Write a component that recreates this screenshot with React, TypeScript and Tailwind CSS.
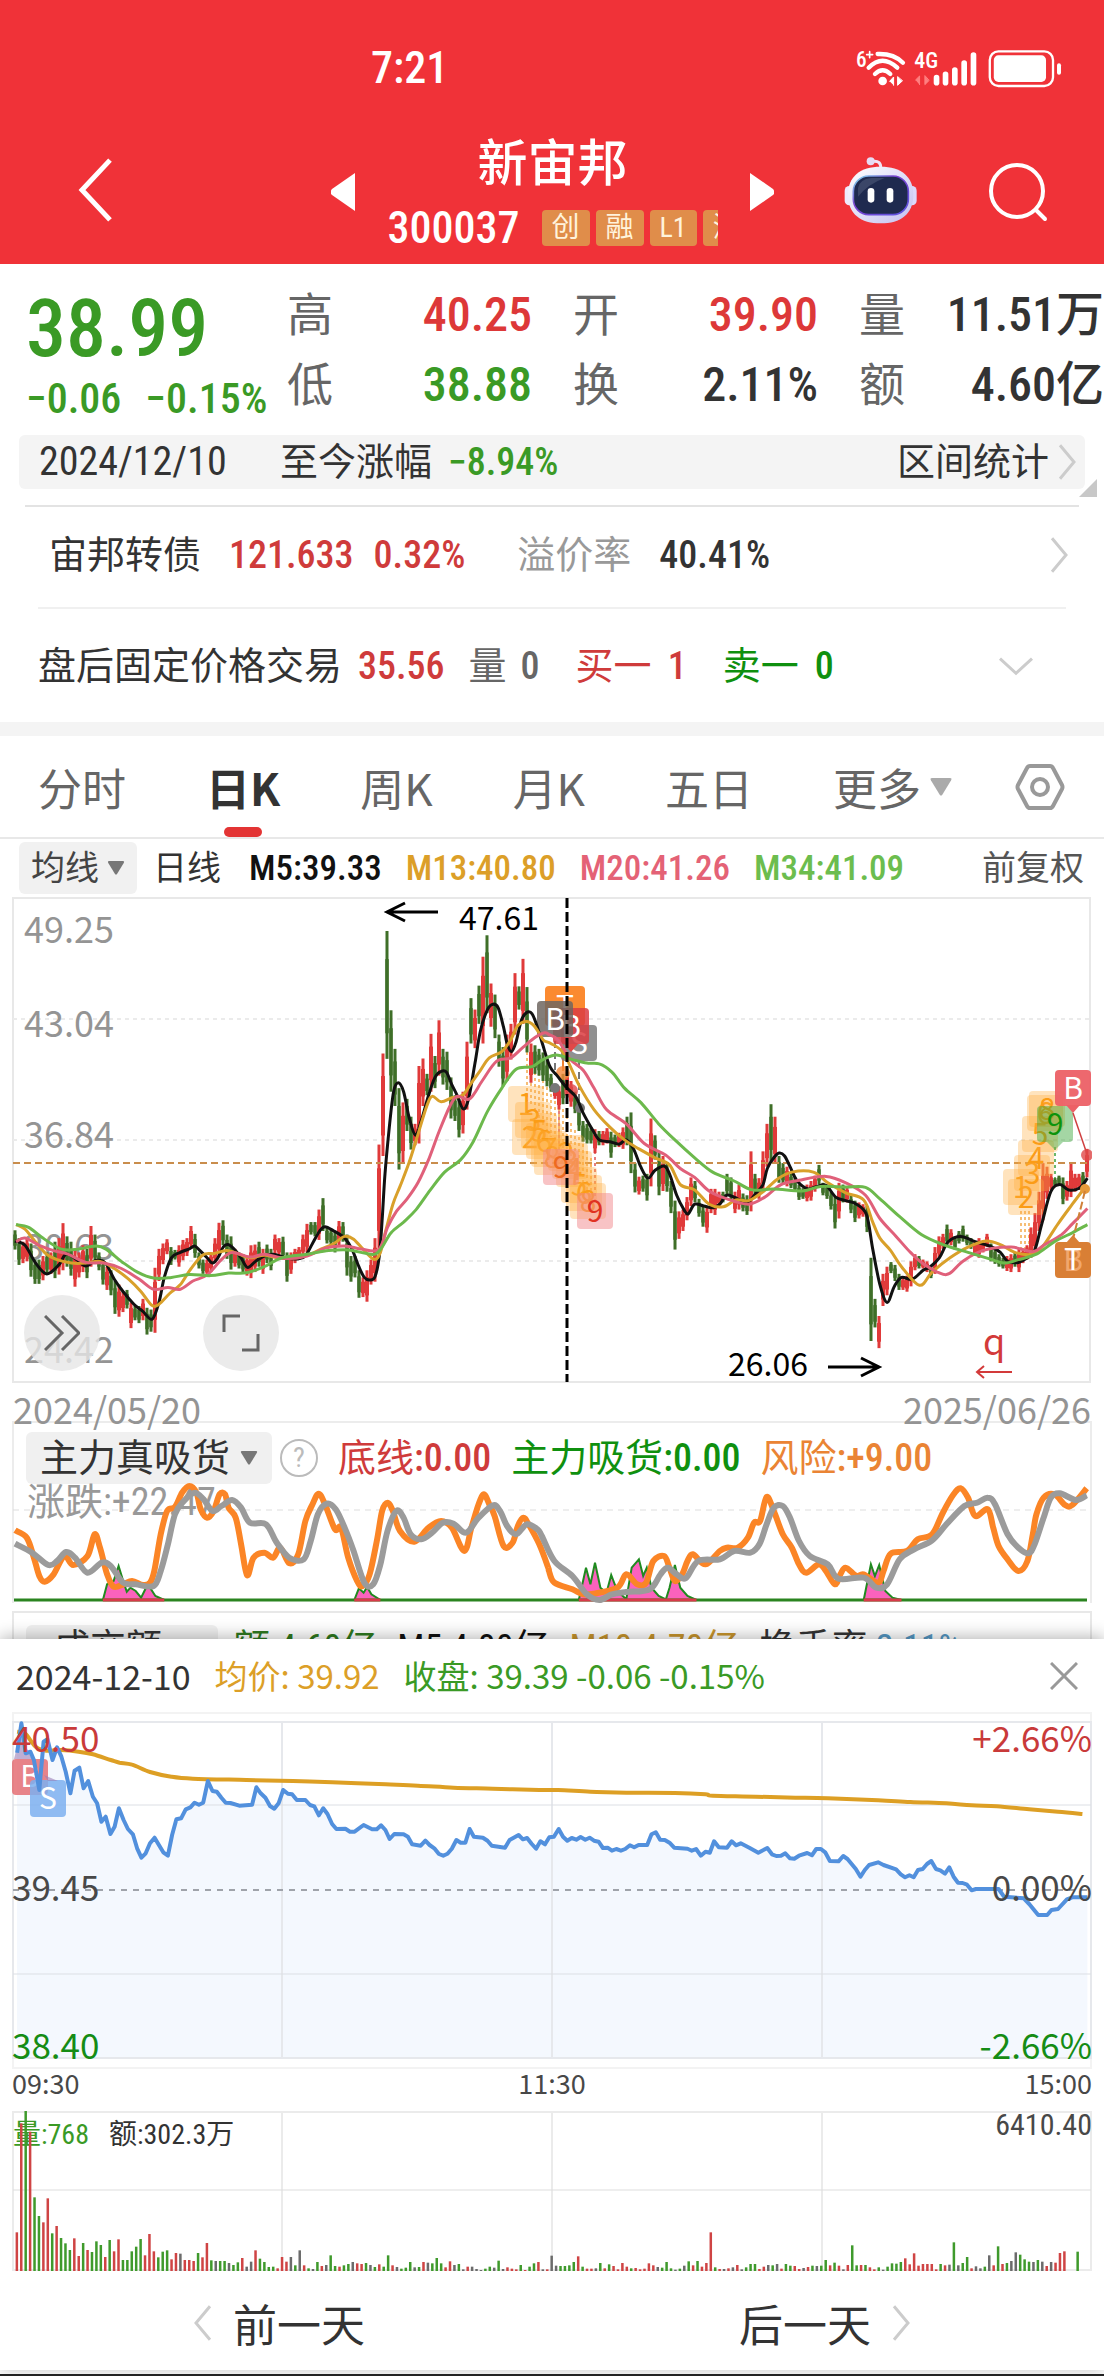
import React from "react";

type Pt = [number, number];
type Frame = { ox: number; oy: number; sx: number; sy: number };

const parse = (s: string, f: Frame): Pt[] =>
  s.trim().split(/\s+/).map((p) => {
    const [x, y] = p.split(",").map(Number);
    return [f.ox + x * f.sx, f.oy + y * f.sy];
  });

const line = (pts: Pt[]) => "M" + pts.map((p) => `${p[0].toFixed(1)} ${p[1].toFixed(1)}`).join("L");

const smooth = (pts: Pt[]) => {
  let d = `M${pts[0][0]} ${pts[0][1]}`;
  for (let i = 0; i < pts.length - 1; i++) {
    const a = pts[Math.max(0, i - 1)];
    const b = pts[i];
    const c = pts[i + 1];
    const e = pts[Math.min(pts.length - 1, i + 2)];
    const n = (v: number) => v.toFixed(1);
    d += `C${n(b[0] + (c[0] - a[0]) / 6)} ${n(b[1] + (c[1] - a[1]) / 6)} ${n(c[0] - (e[0] - b[0]) / 6)} ${n(c[1] - (e[1] - b[1]) / 6)} ${n(c[0])} ${n(c[1])}`;
  }
  return d;
};

const kL: Frame = { ox: 0, oy: 880, sx: 0.35714, sy: 0.35714 };
const kR: Frame = { ox: 540, oy: 880, sx: 0.35969, sy: 0.35714 };
const sL: Frame = { ox: 0, oy: 1400, sx: 0.35714, sy: 1 / 3 };
const sR: Frame = { ox: 540, oy: 1400, sx: 0.35969, sy: 1 / 3 };
const dL: Frame = { ox: 0, oy: 1700, sx: 0.35714, sy: 1 / 3 };
const dR: Frame = { ox: 540, oy: 1700, sx: 0.35969, sy: 1 / 3 };

/* Daily candles: direction, high, low */
const candlesL =
  "g978-1032 g1000-1075 r1010-1070 r1000-1065 g1015-1108 g1060-1128 g1060-1128 r1050-1118 g1040-1100 r1040-1100 g1010-1112 r1000-1102 r958-1090 g995-1080 g1010-1105 r1030-1136 r1040-1110 r1020-1095 g1030-1112 r966-1080 g990-1070 g1040-1090 g1060-1130 r1080-1145 g1090-1160 g1120-1212 r1130-1220 r1150-1207 g1145-1197 r1180-1252 g1190-1230 g1190-1238 r1170-1230 g1195-1270 g1200-1262 r1083-1265 r1030-1120 r1015-1073 r1003-1045 g1025-1075 g1033-1060 r1020-1080 r1005-1062 r1000-1050 r966-1030 g988-1055 g1040-1085 g1060-1100 r1060-1105 r1040-1095 r1000-1070 r957-1050 g950-1020 g990-1058 g995-1088 r1030-1080 g1040-1085 g1045-1098 r1050-1105 r1020-1112 r1018-1095 g1010-1080 r1030-1100 g1018-1070 g1030-1090 r990-1045 r1000-1050 g996-1060 g1040-1122 r1040-1100 r1030-1070 r1025-1060 r990-1050 r960-1040 g955-990 g955-995 r920-1005 g888-980 g970-1015 g975-1020 g980-1040 r952-1020 g955-1010 g990-1105 g1050-1122 g1050-1110 g1090-1167 r1110-1165 r1090-1178 r1060-1130 r1000-1122 r738-1040 r483-770 g140-498 g362-590 g470-630 g580-808 r620-790 g610-700 g660-752 r680-740 r518-735 r497-630 g540-600 r428-590 g490-580 r390-545 g470-570 g478-585 g550-665 g600-672 g610-718 r590-707 r450-640 g328-455 r360-468 g293-400 r212-455 g152-370 r287-408 g318-440 g430-520 g465-575 r430-560 r400-500 r258-430 g295-360 r218-400 g297-480 r455-565 g460-540 g470-545 g480-560 g500-575 g540-590 r570-610 r575-640";
const candlesR =
  "g540-625 r535-600 r560-632 g590-650 g620-700 g672-730 g680-735 g690-735 r695-762 g700-740 r700-740 r692-735 g702-775 g710-745 r705-745 r690-750 g660-740 g648-818 g790-872 r828-878 g825-870 g820-895 r665-855 g712-780 g758-880 r770-868 g790-870 g840-930 g895-1032 r925-1002 r920-980 r885-950 r830-910 g840-900 g890-940 g910-968 r910-985 r862-930 r862-935 r870-910 g870-900 g820-880 g830-895 r870-930 r850-920 g875-925 g880-935 r757-925 g820-880 r832-890 r757-870 r680-800 g625-785 r660-790 g770-845 g790-850 r800-855 g820-860 g830-870 g850-893 g860-890 r850-897 r840-895 r825-870 g795-850 g845-880 g850-890 g870-920 g885-973 r845-945 g850-900 r855-900 g880-930 g895-955 r900-945 r905-940 g910-983 g1055-1288 g1170-1250 r1218-1308 r1100-1190 r1080-1160 g1067-1098 g1075-1120 g1100-1145 r1110-1145 r1105-1150 r1065-1135 r1045-1090 g1050-1085 r1060-1085 r1065-1095 g1080-1112 r1025-1100 r995-1055 r988-1030 g962-1020 r975-1020 g995-1032 g980-1015 g965-1010 g990-1020 g1000-1030 r1010-1050 r1000-1055 r1010-1040 r988-1025 g1015-1065 g1030-1072 g1045-1080 g1055-1085 r1050-1092 r1045-1095 g1040-1080 r1030-1095 r1030-1070 r1020-1060 r970-1055 r930-1045 r870-980 r790-950 r800-890 r820-865 g832-855 g825-850 g830-905 r840-895 r790-885 r820-870 r820-865 g815-860 r750-830";

const candles = [
  ...candlesL.split(" ").map((c, i) => ({ c, x: (42 + 11.2 * i) * kL.sx })),
  ...candlesR.split(" ").map((c, i) => ({ c, x: 540 + (64 + 11.12 * i) * kR.sx })),
].map(({ c, x }) => {
  const [hi, lo] = c.slice(1).split("-").map(Number);
  return { x, up: c[0] === "r", hi: 880 + hi * kL.sy, lo: 880 + lo * kL.sy };
});

const ma = {
  m5: [
    ...parse("42,1008 70,1020 100,1070 131,1100 165,1075 185,1045 215,1060 240,1078 270,1062 295,1070 320,1115 345,1150 375,1185 400,1205 426,1227 445,1180 460,1110 480,1055 505,1040 530,1030 545,1022 560,1035 580,1055 595,1070 610,1055 625,1025 638,1018 655,1030 675,1055 693,1082 715,1065 740,1050 765,1045 800,1055 835,1058 855,1050 875,1015 895,980 910,968 935,980 965,1000 985,1030 1005,1080 1020,1110 1035,1117 1050,1108 1062,1050 1070,950 1078,820 1090,690 1102,590 1115,565 1130,590 1145,660 1163,712 1180,670 1200,600 1218,550 1235,533 1250,535 1265,570 1280,600 1297,638 1312,610 1330,510 1345,420 1365,360 1380,345 1395,355 1410,410 1420,455 1432,478 1445,450 1460,390 1475,368 1490,372 1505,410 1520,460 1540,520 1560,545", kL),
    ...parse("75,580 100,605 120,650 145,695 165,725 195,730 220,737 240,725 260,750 280,800 300,832 320,810 345,798 360,820 380,880 400,920 412,932 430,905 455,910 480,915 500,905 518,880 540,885 575,900 600,875 620,850 632,805 650,775 665,762 680,770 695,800 715,840 745,862 770,855 795,852 822,885 850,895 880,905 908,935 925,1030 945,1130 965,1180 985,1135 1005,1110 1035,1115 1065,1090 1085,1080 1110,1055 1135,1010 1170,995 1210,1010 1250,1022 1280,1040 1300,1065 1330,1068 1355,1055 1375,1035 1395,960 1420,870 1445,850 1470,865 1500,860 1522,832", kR),
  ],
  m13: [
    ...parse("45,962 70,975 95,1005 130,1045 160,1060 200,1070 240,1070 280,1065 320,1085 360,1115 395,1150 425,1188 445,1185 475,1155 505,1130 535,1085 568,1047 600,1043 635,1035 670,1045 700,1055 740,1048 780,1055 830,1055 870,1045 900,1030 935,1015 965,995 990,1003 1020,1035 1048,1060 1065,1040 1080,980 1100,905 1120,855 1145,790 1170,710 1195,630 1210,603 1235,618 1265,607 1295,600 1320,565 1345,530 1370,495 1405,478 1430,445 1450,405 1475,393 1495,405 1512,430", kL),
    ...parse("10,446 30,455 60,475 80,510 110,575 150,640 195,690 235,725 275,750 320,775 360,795 390,850 430,865 470,905 510,912 545,893 580,895 620,870 660,835 700,815 760,815 800,845 850,873 900,893 925,955 945,1000 975,1035 1005,1080 1055,1132 1090,1095 1140,1055 1190,1025 1240,1008 1280,1018 1320,1040 1370,1045 1400,1020 1440,960 1480,905 1510,865", kR),
  ],
  m20: [
    ...parse("45,1010 70,1000 110,1020 150,1035 190,1045 240,1068 290,1070 340,1085 390,1115 430,1143 470,1138 505,1143 540,1120 580,1103 620,1060 650,1040 700,1053 740,1045 800,1057 860,1050 910,1028 965,1022 1010,1030 1060,1032 1085,970 1110,925 1140,890 1170,845 1200,780 1230,700 1260,630 1280,603 1315,610 1350,560 1390,505 1430,495 1465,465 1500,437 1525,425", kL),
    ...parse("25,430 50,445 85,500 120,530 150,580 185,640 240,680 290,735 350,768 390,805 430,830 470,868 520,890 580,905 625,885 670,850 720,838 795,827 850,845 905,880 945,945 990,995 1030,1040 1070,1075 1130,1102 1175,1065 1230,1035 1310,1025 1370,1038 1400,1020 1450,990 1480,960 1522,917", kR),
  ],
  m34: [
    ...parse("45,962 80,970 120,1000 170,1030 210,1032 270,1022 300,1033 340,1065 385,1095 430,1112 480,1110 530,1102 590,1105 640,1098 690,1097 740,1080 790,1055 860,1045 920,1035 975,1033 1020,1042 1050,1045 1070,1025 1095,985 1130,955 1165,920 1205,865 1245,815 1290,780 1325,730 1365,645 1405,580 1445,527 1490,520 1520,500", kL),
    ...parse("45,487 90,500 130,510 165,512 200,535 235,580 280,620 330,680 375,725 430,775 480,815 540,840 590,865 650,862 730,868 780,855 850,857 905,858 945,890 1000,940 1060,990 1120,1018 1190,1040 1250,1058 1290,1070 1330,1060 1380,1045 1430,1010 1480,985 1522,962", kR),
  ],
};

const risk = [
  ...parse("42,388 75,410 95,470 110,525 125,542 150,520 180,465 205,492 245,465 265,400 280,440 300,520 318,557 345,550 370,540 400,552 420,545 432,510 450,400 468,330 490,318 510,275 530,255 550,275 562,325 580,350 598,330 615,280 630,280 640,320 660,350 675,430 692,523 710,470 740,455 765,470 785,440 810,487 835,460 855,360 875,310 892,278 910,310 938,385 955,380 975,470 1000,540 1015,555 1035,520 1055,420 1070,330 1085,305 1100,330 1120,390 1160,422 1200,380 1235,360 1265,380 1300,450 1320,380 1340,310 1355,280 1370,310 1385,345 1410,435 1435,425 1450,375 1465,350 1480,370 1510,430 1535,500", sL),
  ...parse("25,510 40,545 90,565 120,580 150,578 215,560 240,520 270,550 295,545 315,480 345,465 360,500 375,540 395,520 410,480 425,460 460,490 500,450 520,440 550,440 578,410 595,365 612,360 630,288 650,330 675,400 700,440 720,490 740,515 775,490 795,510 820,550 835,520 850,500 880,525 900,520 940,545 955,510 975,458 1020,450 1050,415 1090,400 1120,335 1150,280 1170,262 1190,290 1210,345 1245,325 1260,380 1275,435 1300,475 1330,510 1355,480 1370,400 1380,340 1400,290 1430,280 1460,312 1480,312 1520,262", sR),
];
const swing = [
  ...parse("42,428 90,455 135,492 160,480 185,453 210,470 245,515 285,485 310,495 345,545 380,550 430,555 450,510 470,430 490,340 515,300 545,275 570,295 595,330 620,315 650,297 675,320 700,365 745,370 775,425 810,470 850,475 870,420 890,340 915,308 940,325 965,380 990,450 1020,545 1045,550 1065,490 1085,390 1110,330 1130,350 1150,400 1180,415 1210,395 1240,365 1270,368 1305,395 1340,350 1380,313 1400,330 1420,375 1445,400 1475,370 1505,385", sL),
  ...parse("5,405 40,480 90,525 130,580 165,597 200,580 240,573 305,565 335,520 355,500 380,520 405,532 440,480 500,475 540,450 585,455 610,430 630,370 650,320 675,315 695,350 720,420 750,465 800,490 830,533 900,530 935,560 965,550 1000,475 1040,445 1090,418 1130,370 1180,315 1215,305 1245,290 1265,310 1300,400 1330,440 1358,457 1375,430 1400,350 1420,290 1445,277 1490,297 1520,283", sR),
];
const inflow = [
  parse("288,597 300,550 318,540 332,495 345,540 355,572 365,560 380,570 395,590 410,558 420,560 435,585 460,597", sL),
  parse("992,597 1005,562 1018,575 1028,558 1040,580 1065,597", sL),
  parse("108,597 128,500 140,550 153,485 168,560 185,575 198,522 215,570 240,595 255,500 275,475 287,525 297,500 310,560 330,585 350,595 360,560 375,492 390,560 410,585 435,597", sR),
  parse("900,597 920,490 931,525 943,492 960,570 980,590 1005,597", sR),
];

const price = [
  ...parse("48,158 60,70 72,160 85,155 95,180 110,270 122,125 133,118 147,180 160,142 172,170 184,215 197,280 209,212 222,203 234,265 247,243 260,290 272,310 284,365 296,350 309,402 321,380 333,325 346,360 358,387 372,403 384,445 396,473 408,460 420,430 433,413 445,435 458,458 470,467 482,405 494,358 507,355 520,328 533,322 545,308 557,314 569,308 582,243 595,273 607,275 620,293 632,308 645,309 670,317 706,314 718,262 730,280 743,293 756,318 768,326 780,310 793,270 806,281 818,283 831,300 855,300 868,315 880,319 893,346 905,325 917,342 930,372 942,387 967,386 980,395 993,395 1018,375 1042,388 1055,388 1067,376 1079,390 1091,417 1104,402 1130,403 1142,410 1154,433 1178,437 1191,422 1203,435 1216,445 1229,462 1241,467 1253,461 1265,446 1278,420 1290,428 1303,428 1315,387 1327,410 1352,413 1365,422 1377,437 1414,443 1427,420 1452,405 1464,418 1476,414 1489,432 1501,446 1513,424 1526,433 1538,412 1551,410", dL),
  ...parse("52,387 64,410 76,422 88,414 101,419 113,411 126,419 138,413 150,422 163,425 175,444 188,443 200,452 212,447 225,452 237,447 250,436 262,442 274,435 298,435 310,403 322,397 334,419 347,420 360,428 373,443 410,446 422,452 434,447 447,467 460,455 472,458 484,424 497,442 520,443 533,424 545,436 558,430 582,443 607,458 632,444 645,463 657,468 670,467 682,460 695,475 707,476 720,467 743,459 756,466 768,447 781,447 793,457 806,483 830,484 843,468 855,477 878,507 891,530 903,510 915,495 940,487 955,495 990,508 1003,523 1015,532 1027,526 1039,532 1051,510 1064,507 1076,492 1088,483 1101,507 1113,511 1126,521 1138,502 1150,530 1162,548 1175,549 1187,554 1200,571 1212,567 1275,567 1290,590 1345,595 1360,612 1385,645 1410,645 1422,630 1440,627 1465,598 1480,592 1522,592", dR),
];
const average = [
  ...parse("48,95 70,100 100,140 130,152 170,150 220,155 260,163 310,180 335,188 370,194 420,216 480,230 540,236 690,240 820,243 930,247 1080,253 1170,257 1270,263 1380,266 1510,270", dL),
  ...parse("50,270 140,275 240,278 375,279 460,283 480,287 600,290 710,293 800,295 940,301 1030,306 1130,310 1200,316 1270,319 1360,328 1440,335 1508,342", dR),
];

const volume =
  "r457 r130 g90 r155 g352 g408 r427 r355 g460 r438 g474 g490 g510 r475 r528 g489 r510 g516 g484 g495 r531 g480 r514 r478 g540 g540 g514 g500 g477 r526 r462 r514 g532 g515 g511 r538 r519 k521 r540 r540 r543 g519 r532 r489 g541 k543 g543 g543 k549 g555 g547 r534 k560 k545 r511 g536 g546 g561 g560 r565 r531 r545 k531 g556 k511 r556 g565 k567 g546 r558 k555 g526 g558 r560 g556 g552 k546 r550 r552 g549 k555 g561 r553 g560 g526 r556 k561 g566 g563 g546 k562 g561 r546 k548 g550 g534 g550 r562 r544 k555 g552 k568 r560 k560 k567 k570 g566 g560 k563 g542 k567 r562 r566 r568 g555 r570 g560 g550 r546 k568 r568 k527 k557 g558 g558 g556 g546 r529 g560 r566 r566 k565 g549 r565 g553 r558 r568 r549 r560 g565 r564 r568 r566 r550 r556 k561 g563 g546 g565 k569 g566 k557 g544 r556 g543 r560 r549 r457 g562 r567 k567 r565 k562 r555 k568 g562 g552 g552 r567 r560 k555 g556 k552 r566 g552 g557 r558 r567 k564 r561 g557 k558 g557 g540 r556 g548 r557 k568 r555 g496 g556 r555 g555 r562 r568 g562 k569 g560 g550 g551 g546 r535 r553 r520 r557 r552 r552 r552 r568 g552 r556 k554 g487 k556 g549 g531 r565 k559 k565 g560 k526 r556 g499 r552 g549 k543 k517 g524 g538 g545 k546 g540 k545 r558 k546 r548 r519 r514 k573 k573 g515";
const volumeColor: Record<string, string> = { r: "#cf4444", g: "#3f9a2c", k: "#6b6b6b" };

const Chevron = ({ dir, className, weight = 3 }: { dir: "left" | "right" | "down"; className: string; weight?: number }) => {
  const d = { left: "M17 2 3 30 17 58", right: "M3 2 17 30 3 58", down: "M2 3 18 19 34 3" }[dir];
  return (
    <svg className={className} viewBox={dir === "down" ? "0 0 36 22" : "0 0 20 60"} preserveAspectRatio="none" fill="none" stroke="currentColor" strokeWidth={weight} aria-hidden="true">
      <path d={d} vectorEffect="non-scaling-stroke" />
    </svg>
  );
};

const Caret = ({ className }: { className: string }) => (
  <svg className={className} viewBox="0 0 20 16" fill="currentColor" aria-hidden="true">
    <path d="M2 0h16q2 0 1 2l-8 13q-1 1-2 0L1 2Q0 0 2 0" />
  </svg>
);

const Tag = ({ children }: { children: React.ReactNode }) => (
  <span className="flex h-9 shrink-0 items-center rounded-sm bg-[#e08d4a] px-2.5 text-[28px] leading-9 text-[#fff3dc]">{children}</span>
);

const StatusIcons = () => (
  <svg className="h-10 w-[208px]" viewBox="100 50 625 120" fill="none" stroke="white" strokeWidth="11" strokeLinecap="round" role="img" aria-label="Wi-Fi, 4G, battery">
    <text x="103" y="106" fontSize="64" fontWeight="500" fill="white" stroke="none">6</text>
    <path d="M135 70h18M144 61v18" strokeWidth="5" />
    <path d="M168 68q48-2 76 26M141 109q41-42 86 0M160 128q23-22 46 0" strokeWidth="13" />
    <circle cx="183" cy="149" r="13" fill="white" stroke="none" />
    <path d="M204 150l12-13v25M228 137v25l14-13z" fill="white" strokeWidth="3" />
    <text x="278" y="110" fontSize="66" fontWeight="500" fill="white" stroke="none">4G</text>
    <path d="M282 146l12-12v26M310 134v26l12-12z" fill="#ff7f80" stroke="#ff7f80" strokeWidth="3" />
    <path d="M345 139v15M372 129v25M400 116v38M428 95v59M456 71v83" strokeWidth="17" />
    <rect x="505" y="60" width="190" height="104" rx="26" strokeWidth="7" />
    <rect x="517" y="72" width="157" height="80" rx="14" fill="white" stroke="none" />
    <path d="M713 102v22" strokeWidth="12" />
  </svg>
);

const Robot = () => (
  <svg className="h-[68px] w-[74px]" viewBox="70 374 222 204" aria-hidden="true">
    <defs>
      <linearGradient id="shell" x1="0" y1="0" x2="1" y2="1">
        <stop offset="0" stopColor="#ffffff" />
        <stop offset="1" stopColor="#c3c0f0" />
      </linearGradient>
      <linearGradient id="rim" x1="0" y1="0" x2="1" y2="1">
        <stop offset="0" stopColor="#7fe0ee" />
        <stop offset="0.4" stopColor="#7a3fd0" />
        <stop offset="1" stopColor="#5a55e0" />
      </linearGradient>
    </defs>
    <path d="M155 390q28-4 25 24" fill="none" stroke="#f1e3f5" strokeWidth="9" />
    <circle cx="150" cy="390" r="12" fill="#e6dbf3" />
    <rect x="72" y="464" width="30" height="58" rx="14" fill="#efeafc" />
    <rect x="258" y="464" width="30" height="58" rx="14" fill="#dcd8fa" />
    <path d="M180 406c62 0 98 30 98 84 0 58-38 86-98 86s-98-28-98-86c0-54 36-84 98-84" fill="url(#shell)" />
    <rect x="98" y="434" width="165" height="116" rx="46" fill="#1f2a4f" stroke="url(#rim)" strokeWidth="5" />
    <path d="M112 470q4-26 40-30h40q-50 18-80 56z" fill="#3b4668" />
    <rect x="141" y="470" width="20" height="44" rx="10" fill="white" />
    <rect x="198" y="470" width="20" height="44" rx="10" fill="white" />
  </svg>
);

const Header = () => (
  <header className="bg-[#f03238] text-white">
    <div className="flex h-[132px] items-center pt-1 pr-[41px] pl-[371px]">
      <time className="flex-1 text-[44px] leading-none font-medium">7:21</time>
      <StatusIcons />
    </div>
    <div className="flex h-[132px] items-center pr-14 pl-[76px]">
      <button aria-label="返回" className="mb-4 w-[255px]">
        <Chevron dir="left" className="h-16 w-10" weight={5} />
      </button>
      <button aria-label="上一只" className="mb-3">
        <svg className="h-10 w-6" viewBox="0 0 24 40" fill="currentColor"><path d="M24 1v38L1 23q-3-3 0-6z" /></svg>
      </button>
      <div className="flex flex-1 flex-col items-center">
        <h1 className="text-[50px] leading-[60px] font-medium">新宙邦</h1>
        <div className="flex w-[330px] items-center gap-1.5 overflow-hidden">
          <span className="mr-4 text-[44px] leading-[68px] font-medium">300037</span>
          <Tag>创</Tag>
          <Tag>融</Tag>
          <Tag>L1</Tag>
          <Tag>深</Tag>
        </div>
      </div>
      <button aria-label="下一只" className="mr-[70px] mb-3">
        <svg className="h-10 w-6" viewBox="0 0 24 40" fill="currentColor"><path d="M0 1v38l23-16q3-3 0-6z" /></svg>
      </button>
      <button aria-label="智能助手" className="mr-[70px] mb-4">
        <Robot />
      </button>
      <button aria-label="搜索" className="mb-3">
        <svg className="size-[60px]" viewBox="0 0 60 60" fill="none" stroke="currentColor" strokeWidth="4" strokeLinecap="round">
          <circle cx="29" cy="29" r="26" />
          <path d="M48 48l9 9" />
        </svg>
      </button>
    </div>
  </header>
);

const stats = [
  ["高", "40.25", "text-[#dd3838]"],
  ["开", "39.90", "text-[#dd3838]"],
  ["量", "11.51万", "text-[#333]"],
  ["低", "38.88", "text-[#3a9a25]"],
  ["换", "2.11%", "text-[#333]"],
  ["额", "4.60亿", "text-[#333]"],
];

const Quote = () => (
  <section>
    <div className="flex h-[171px] pt-4">
      <div className="w-[287px] pl-[26px] whitespace-nowrap text-[#3a9a25]">
        <div className="text-[80px] leading-[98px] font-medium">38.99</div>
        <div className="flex gap-6 text-[42px] leading-[42px] font-medium">
          <span>−0.06</span>
          <span>−0.15%</span>
        </div>
      </div>
      <dl className="grid flex-1 grid-cols-3 content-start gap-x-[41px]">
        {stats.map(([k, v, c]) => (
          <div key={k} className="flex h-[70px] items-center justify-between text-[46px] leading-none whitespace-nowrap">
            <dt className="text-[#666]">{k}</dt>
            <dd className={`text-[48px] font-medium ${c}`}>{v}</dd>
          </div>
        ))}
      </dl>
    </div>
    <div className="relative mx-[19px] flex h-[54px] items-center rounded-md bg-[#f4f4f4] pr-2 pl-5 text-[38px] leading-none text-[#333]">
      <time className="w-[241px] text-[40px]">2024/12/10</time>
      <span>至今涨幅</span>
      <span className="ml-4 flex-1 font-medium text-[#3a9a25]">−8.94%</span>
      <button className="flex items-center gap-2">
        区间统计
        <Chevron dir="right" className="h-9 w-5 text-[#ccc]" />
      </button>
      <svg className="absolute -right-3 -bottom-2 size-[18px] text-[#c8c8c8]" viewBox="0 0 18 18" fill="currentColor" aria-hidden="true"><path d="M18 0v18H0z" /></svg>
    </div>
    <div className="mx-[25px] mt-4 flex h-[102px] items-center border-t-2 border-[#e3e3e3] pr-2.5 pb-1 pl-6 text-[38px] leading-none">
      <span className="text-[#333]">宙邦转债</span>
      <span className="ml-7 font-medium text-[#cf3b3b]">121.633</span>
      <span className="ml-5 font-medium text-[#cf3b3b]">0.32%</span>
      <span className="ml-13 text-[#999]">溢价率</span>
      <span className="ml-7 flex-1 font-medium text-[#333]">40.41%</span>
      <Chevron dir="right" className="h-9 w-5 text-[#ccc]" />
    </div>
    <div className="mx-[38px] flex h-[115px] items-center border-t-2 border-[#f0f0f0] text-[38px] leading-none">
      <span className="text-[#333]">盘后固定价格交易</span>
      <span className="ml-4 font-medium text-[#cf3b3b]">35.56</span>
      <span className="ml-6 text-[#666]">量</span>
      <span className="ml-3.5 font-medium text-[#666]">0</span>
      <span className="ml-9 text-[#cf3b3b]">买一</span>
      <span className="ml-4 font-medium text-[#cf3b3b]">1</span>
      <span className="ml-9 text-[#0f900f]">卖一</span>
      <span className="ml-4 flex-1 font-medium text-[#0f900f]">0</span>
      <Chevron dir="down" className="mr-8 h-5 w-9 text-[#ccc]" />
    </div>
  </section>
);

const tabs = ["分时", "日K", "周K", "月K", "五日"];

const Tabs = () => (
  <nav className="flex h-[117px] items-center gap-20 border-t-[14px] border-b-2 border-t-[#f4f4f4] border-b-[#e8e8e8] px-[38px] font-['Noto_Sans_CJK_SC',sans-serif] text-[44px] leading-none whitespace-nowrap text-[#666]">
    {tabs.map((t) => (
      <button key={t} className={t === "日K" ? "relative h-full font-bold text-[#333]" : "h-full"}>
        {t}
        {t === "日K" && <span className="absolute bottom-0 left-1/2 h-2.5 w-[38px] -translate-x-1/2 rounded-full bg-[#e33434]" />}
      </button>
    ))}
    <button className="flex h-full items-center gap-2">
      更多
      <Caret className="h-[18px] w-6 text-[#aaa]" />
    </button>
    <button aria-label="设置" className="-ml-20 flex flex-1 justify-end">
      <svg className="h-12 w-[52px]" viewBox="0 0 52 48" fill="none" stroke="#999" strokeWidth="4" strokeLinejoin="round">
        <path d="M16 3h20q2 0 3 2l9 17q1 2 0 4l-9 17q-1 2-3 2H16q-2 0-3-2L4 26q-1-2 0-4l9-17q1-2 3-2z" />
        <circle cx="26" cy="24" r="8" />
      </svg>
    </button>
  </nav>
);

const Averages = () => (
  <div className="flex h-[58px] items-center pr-5 pl-[19px] text-[35px] leading-none font-medium">
    <button className="flex h-[52px] items-center gap-2 rounded-md bg-[#f1f1f1] px-3 text-[34px] font-normal text-[#444]">
      均线
      <Caret className="h-3.5 w-[18px] text-[#777]" />
    </button>
    <span className="ml-4 text-[34px] font-normal text-[#333]">日线</span>
    <span className="ml-7 text-[#111]">M5:39.33</span>
    <span className="ml-6 text-[#dc9f28]">M13:40.80</span>
    <span className="ml-6 text-[#e46276]">M20:41.26</span>
    <span className="ml-6 flex-1 text-[#6cbd4e]">M34:41.09</span>
    <button className="text-[34px] font-normal text-[#555]">前复权</button>
  </div>
);

const Badge = ({ x, y, t, fill, o = 0.85, color = "white", s = 36 }: { x: number; y: number; t: string; fill: string; o?: number; color?: string; s?: number }) => (
  <g>
    <rect x={x - s / 2} y={y - s / 2} width={s} height={s} rx="4" fill={fill} opacity={o} />
    <text x={x} y={y + 11} fontSize="30" textAnchor="middle" fill={color}>{t}</text>
  </g>
);

const countdown: [number, number, string][] = [
  [526, 1103, "1"], [533, 1119, "3"], [530, 1136, "2"], [539, 1130, "5"], [544, 1140, "6"], [549, 1148, "7"], [552, 1156, "8"],
  [566, 1152, "2"], [570, 1160, "3"], [574, 1168, "4"], [579, 1184, "5"], [584, 1192, "6"], [588, 1200, "8"],
];
const countup: [number, number, string][] = [
  [1021, 1186, "1"], [1026, 1196, "2"], [1032, 1172, "3"], [1036, 1157, "4"], [1040, 1133, "5"], [1045, 1112, "6"], [1047, 1108, "8"],
];

const KChart = () => (
  <div className="relative mx-3">
    <svg className="block w-full" viewBox="12 896 1080 486" role="img" aria-label="日K线图" fontFamily="'Noto Sans CJK SC', sans-serif">
      <rect x="13" y="897" width="1077" height="484" fill="none" stroke="#e8e8e8" strokeWidth="2" />
      {[1018, 1139, 1260].map((y) => (
        <path key={y} d={`M13 ${y}H1090`} stroke="#ebebeb" strokeWidth="2" strokeDasharray="4 4" />
      ))}
      <g fontSize="36" fill="#949494">
        <text x="24" y="942">49.25</text>
        <text x="24" y="1036">43.04</text>
        <text x="24" y="1147">36.84</text>
        <text x="24" y="1259">30.63</text>
        <text x="24" y="1362">24.42</text>
      </g>
      <g stroke="#f3a94a" strokeWidth="1.5" strokeDasharray="3 3">
        {Array.from({ length: 17 }, (_, i) => (
          <path key={i} d={`M${527 + i * 4} ${1045 + i * 7}V${1100 + i * 6}`} />
        ))}
        {[1021, 1025, 1029].map((x) => <path key={x} d={`M${x} 1210v44`} />)}
      </g>
      <path d="M559 1110v50M595 1150v50" stroke="#dd5555" strokeWidth="1.5" strokeDasharray="3 3" />
      <path d="M1055 1146v40" stroke="#3aa03a" strokeWidth="1.5" strokeDasharray="3 3" />
      {candles.map((c, i) => {
        const h = c.lo - c.hi;
        return (
          <g key={i} fill={c.up ? "#e03a3a" : "#3f6f28"}>
            <rect x={c.x - 1.5} y={c.hi} width="3" height={h} />
            <rect x={c.x - 2} y={c.hi + h * 0.22} width="4" height={h * 0.58} opacity={c.up ? 1 : 0.75} />
          </g>
        );
      })}
      <path d="M13 1162H1090" stroke="#c98d4c" strokeWidth="2" strokeDasharray="7 4" />
      {countdown.map(([x, y, t], i) => <Badge key={i} x={x} y={y} t={t} fill="#ffae3d" o={0.34} color="#fb9c16" />)}
      <Badge x={561} y={1166} t="9" fill="#f2888c" o={0.5} color="#ee6a20" />
      <Badge x={595} y={1210} t="9" fill="#f2888c" o={0.5} color="#e03222" />
      {countup.map(([x, y, t], i) => <Badge key={i} x={x} y={y} t={t} fill="#ffae3d" o={0.34} color="#fb9c16" />)}
      <path d="M1047 1141h16l-8 8z" fill="#4fb04f" opacity="0.5" />
      <Badge x={1055} y={1123} t="9" fill="#35a435" o={0.45} color="#0c930c" />
      <path d="M555 1040v34M579 1060v40" stroke="#777" strokeWidth="2" strokeDasharray="7 4" />
      <path d="M563 1020v50" stroke="#ee8030" strokeWidth="2" />
      <circle cx="563" cy="1072" r="7" fill="#f5893a" opacity="0.8" />
      <circle cx="571" cy="1090" r="7" fill="#e04848" opacity="0.8" />
      <circle cx="555" cy="1087" r="5" fill="#777" />
      <circle cx="580" cy="1107" r="5" fill="#777" />
      <Badge x={565} y={1005} t="T" fill="#fb8425" o={0.95} s={40} />
      <Badge x={579} y={1042} t="S" fill="#7d7d7d" />
      <Badge x={571} y={1025} t="B" fill="#da3c42" />
      <path d="M564 1043h14l-7 8z" fill="#e04848" />
      <Badge x={555} y={1018} t="B" fill="#6f6660" />
      <g fill="none" strokeWidth="3" strokeLinejoin="round">
        <path d={smooth(ma.m5)} stroke="#111" />
        <path d={smooth(ma.m13)} stroke="#d9a02a" />
        <path d={smooth(ma.m20)} stroke="#e0607a" />
        <path d={smooth(ma.m34)} stroke="#6cb94c" />
      </g>
      <path d="M567 897v484" stroke="black" strokeWidth="3" strokeDasharray="10 4" />
      <g fill="none" stroke="black" strokeWidth="3">
        <path d="M438 911h-50M405 902l-18 9 18 9" />
        <path d="M828 1366h50M861 1357l18 9-18 9" />
      </g>
      <text x="459" y="929" fontSize="32">47.61</text>
      <text x="728" y="1375" fontSize="32">26.06</text>
      <text x="983" y="1354" fontSize="36" fill="#d33a3a">q</text>
      <path d="M1012 1371h-35M984 1365l-7 6 7 6" fill="none" stroke="#d33a3a" strokeWidth="2" />
      <path d="M1073 1112l14 41" stroke="#cf4040" strokeWidth="1.5" />
      <path d="M1066 1104h14l-7 8z" fill="#ec6066" />
      <circle cx="1087" cy="1154" r="6" fill="#e04848" opacity="0.8" />
      <circle cx="1085" cy="1188" r="5" fill="#e79a3a" />
      <path d="M1085 1190l-12 48" stroke="#d08038" strokeWidth="2" strokeDasharray="8 3" />
      <path d="M1066 1242h14l-7-8z" fill="#d97f35" />
      <Badge x={1073} y={1087} t="B" fill="#ec6066" o={0.95} />
      <Badge x={1073} y={1259} t="B" fill="#d97f35" o={1} color="#f2a76c" />
      <text x="1073" y="1269" fontSize="30" textAnchor="middle" fill="white">T</text>
    </svg>
    <button aria-label="展开" className="absolute bottom-3 left-3 flex size-[76px] items-center justify-center rounded-full bg-[#e6e6e6]/80">
      <svg className="size-9" viewBox="0 0 36 36" fill="none" stroke="#666" strokeWidth="3"><path d="M1 1l17 17L1 35M18 1l17 17-17 17" /></svg>
    </button>
    <button aria-label="全屏" className="absolute bottom-3 left-[191px] flex size-[76px] items-center justify-center rounded-full bg-[#ebebeb]">
      <svg className="size-[38px]" viewBox="0 0 38 38" fill="none" stroke="#666" strokeWidth="3"><path d="M2 18V2h16M36 20v16H20" /></svg>
    </button>
  </div>
);

const Indicator = () => (
  <section className="mx-3 border-2 border-b-0 border-[#ececec] text-[38px] leading-none">
    <div className="flex h-[62px] items-center pt-2 pl-3">
      <button className="flex h-[52px] items-center gap-2.5 rounded-md bg-[#f0f0f0] px-3.5 text-[#333]">
        主力真吸货
        <Caret className="h-3.5 w-[18px] text-[#777]" />
      </button>
      <button aria-label="说明" className="ml-2 flex size-[38px] items-center justify-center rounded-full border-2 border-[#bbb] text-[28px] text-[#bbb]">?</button>
      <span className="ml-5 text-[#cf3b3b]">底线<span className="font-medium">:0.00</span></span>
      <span className="ml-5 text-[#0f900f]">主力吸货<span className="font-medium">:0.00</span></span>
      <span className="ml-5 text-[#ea8434]">风险<span className="font-medium">:+9.00</span></span>
    </div>
    <svg className="block w-full overflow-visible" viewBox="14 1484 1076 118" role="img" aria-label="主力真吸货指标图">
      <path d="M13 1509H1090" stroke="#ddd" strokeDasharray="6 5" />
      <text x="27" y="1514" fontSize="38" fill="#999">涨跌:+22.47</text>
      {inflow.map((p, i) => (
        <path key={i} d={line(p) + "Z"} fill="#fb62bd" stroke="#1f8a1f" strokeWidth="2" />
      ))}
      <path d="M14 1599H1087" stroke="#2b8420" strokeWidth="3" />
      {inflow.map((p, i) => <path key={i} d={`M${p[0][0]} 1599H${p[p.length - 1][0]}`} stroke="#d83a4a" strokeWidth="3" />)}
      <path d={smooth(risk)} fill="none" stroke="#fb8526" strokeWidth="6" />
      <path d={smooth(swing)} fill="none" stroke="#9b9b9b" strokeWidth="6" />
    </svg>
  </section>
);

const Turnover = () => (
  <section className="mx-3 mt-2 h-7 overflow-hidden border-2 border-b-0 border-[#e8e8e8]">
    <div className="flex h-[62px] items-center pt-2 pl-3 text-[36px] leading-none">
      <button className="flex h-[46px] items-center gap-2.5 rounded-md bg-[#f0f0f0] px-7 text-[#333]">
        成交额
        <Caret className="h-3.5 w-[18px] text-[#777]" />
      </button>
      <span className="ml-4 text-[#2f7a20]">额:4.60亿</span>
      <span className="ml-5 text-[#111]">M5:4.80亿</span>
      <span className="ml-5 text-[#c8952c]">M10:4.70亿</span>
      <span className="ml-5 text-[#333]">换手率:<span className="text-[#5598c4]">2.11%</span></span>
    </div>
  </section>
);

const DayPanel = () => (
  <section className="relative bg-white pb-6 font-['Noto_Sans_CJK_SC',sans-serif] shadow-[0_-2px_16px_rgba(0,0,0,0.3)]">
    <div className="flex h-[73px] items-center pr-[26px] pl-4 text-[33px] leading-none">
      <time className="text-[34px] text-[#333]">2024-12-10</time>
      <span className="ml-6 text-[#dc9f28]">均价: 39.92</span>
      <span className="ml-6 flex-1 text-[#3a9a25]">收盘: 39.39 -0.06 -0.15%</span>
      <button aria-label="关闭">
        <svg className="size-7" viewBox="0 0 28 28" stroke="#999" strokeWidth="3"><path d="M1 1l26 26M27 1 1 27" /></svg>
      </button>
    </div>
    <div className="mx-3">
      <svg className="block w-full" viewBox="12 1712 1080 358" role="img" aria-label="分时图">
        <rect x="13" y="1713" width="1078" height="355" fill="none" stroke="#f3f3f3" strokeWidth="2" />
        <path d={line(price) + "V2058H17Z"} fill="#f4f8fe" />
        <g fill="none" stroke="#e6e8ec" strokeWidth="2">
          <path d="M13 1722H1091V2058H13ZM282 1722V2058M552 1722V2058M822 1722V2058" />
          <path d="M13 1805H1091M13 1974H1091" stroke="#dcdfe4" strokeWidth="1" />
        </g>
        <path d="M13 1890H1091" stroke="#9fa3aa" strokeWidth="2" strokeDasharray="6 6" />
        <path d={smooth(average)} fill="none" stroke="#dd9f24" strokeWidth="4" />
        <rect x="12" y="1759" width="36" height="36" rx="4" fill="#e4656b" opacity="0.8" />
        <text x="30" y="1787" fontSize="30" textAnchor="middle" fill="white">B</text>
        <rect x="30" y="1780" width="36" height="37" rx="4" fill="#7db0f0" opacity="0.85" />
        <path d="M14 1759l6-24 12 24zM48 1781l-4-6 14 6z" fill="#9a7fb8" opacity="0.6" />
        <path d={line(price)} fill="none" stroke="#5290dd" strokeWidth="4" strokeLinejoin="round" />
        <text x="48" y="1809" fontSize="30" textAnchor="middle" fill="white">S</text>
        <g fontSize="35">
          <text x="12" y="1752" fill="#c93a3a">40.50</text>
          <text x="12" y="1901" fill="#484848">39.45</text>
          <text x="12" y="2059" fill="#158c15">38.40</text>
          <g textAnchor="end">
            <text x="1092" y="1752" fill="#c93a3a">+2.66%</text>
            <text x="1092" y="1901" fill="#484848">0.00%</text>
            <text x="1092" y="2059" fill="#158c15">-2.66%</text>
          </g>
        </g>
      </svg>
      <div className="flex h-[41px] justify-between text-[27px] leading-[26px] text-[#484848]">
        <span>09:30</span>
        <span>11:30</span>
        <span>15:00</span>
      </div>
      <svg className="block w-full" viewBox="12 2111 1080 161" role="img" aria-label="成交量">
        <path d="M13 2112H1091V2270H13ZM282 2112V2270M552 2112V2270M822 2112V2270" fill="none" stroke="#ebebeb" strokeWidth="2" />
        <path d="M13 2190H1091" stroke="#ddd" strokeWidth="1" />
        <g fontSize="28" fontFamily="'Roboto Condensed','Noto Sans CJK SC',sans-serif">
          <text x="13" y="2144" fill="#3a9a25">量:768</text>
          <text x="109" y="2144" fill="#333">额:302.3万</text>
          <text x="1092" y="2135" fontSize="30" textAnchor="end" fill="#484848">6410.40</text>
        </g>
        {volume.split(" ").map((v, i) => {
          const top = 2080 + Number(v.slice(1)) / 3;
          return <rect key={i} x={15.6 + i * 4.42} y={top} width="2.5" height={2271 - top} fill={volumeColor[v[0]]} />;
        })}
      </svg>
    </div>
    <div className="mt-7 grid grid-cols-2 text-[44px] leading-[46px] text-[#333]">
      <button className="flex items-center gap-5 pl-[193px]">
        <Chevron dir="left" className="h-9 w-5 text-[#ccc]" />
        前一天
      </button>
      <button className="flex items-center justify-end gap-5 pr-[193px]">
        后一天
        <Chevron dir="right" className="h-9 w-5 text-[#ccc]" />
      </button>
    </div>
  </section>
);

export default function App() {
  return (
    <main className="min-h-screen w-full overflow-x-hidden border-b-2 border-[#222] bg-white font-['Roboto_Condensed','Noto_Sans_CJK_SC',sans-serif]">
      <Header />
      <Quote />
      <Tabs />
      <Averages />
      <KChart />
      <div className="mx-[13px] flex h-[38px] justify-between font-['Noto_Sans_CJK_SC',sans-serif] text-[36px] leading-[50px] text-[#949494]">
        <time>2024/05/20</time>
        <time>2025/06/26</time>
      </div>
      <Indicator />
      <Turnover />
      <DayPanel />
    </main>
  );
}
